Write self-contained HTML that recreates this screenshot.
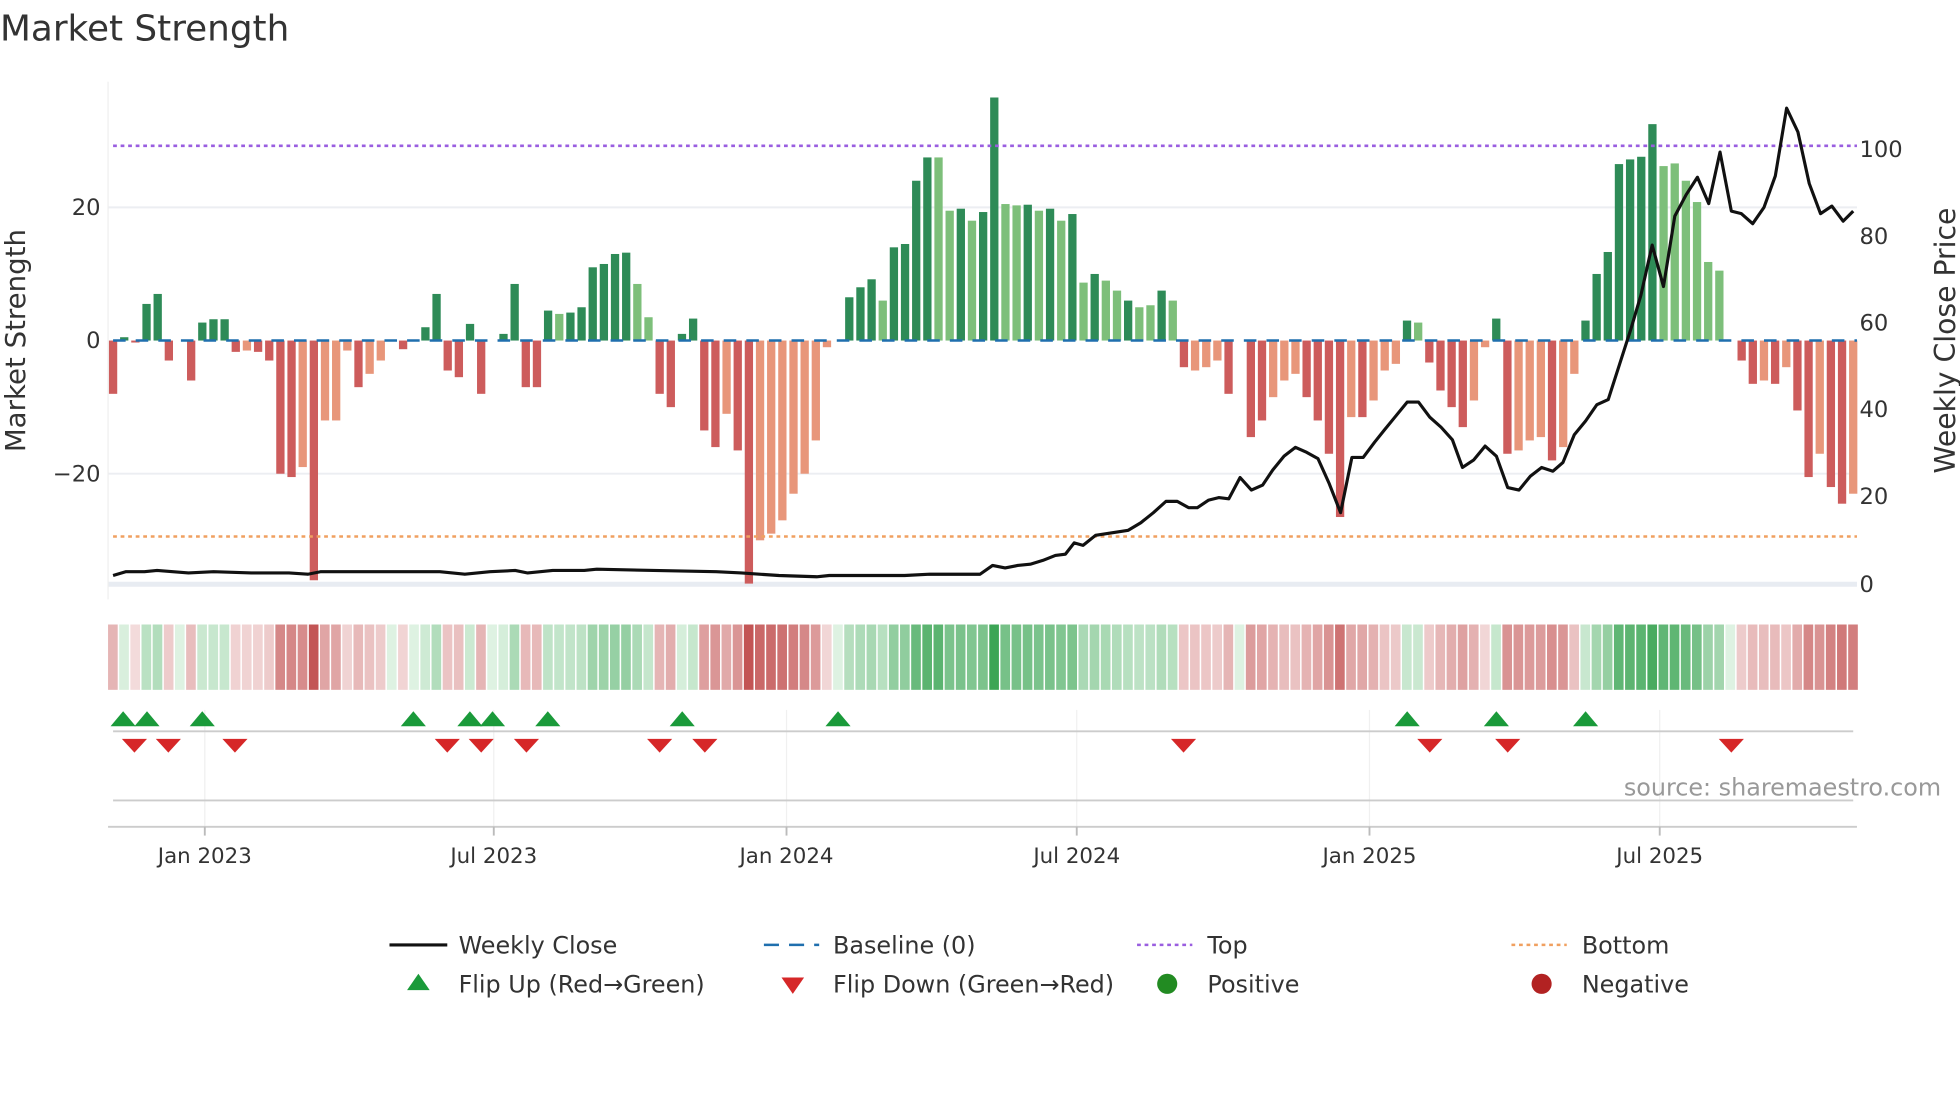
<!DOCTYPE html>
<html><head><meta charset="utf-8"><style>
html,body{margin:0;padding:0;background:#fff;width:1960px;height:1102px;overflow:hidden}
svg{display:block;font-family:"DejaVu Sans","Liberation Sans",sans-serif}
</style></head><body>
<svg id="s" width="1960" height="1102" viewBox="0 0 1560 877" xmlns="http://www.w3.org/2000/svg">
<text x="0" y="32" font-size="28.5" fill="#333">Market Strength</text>
<g stroke="#eceef2" stroke-width="1.5"><line x1="86" y1="165" x2="1478" y2="165"/><line x1="86" y1="377" x2="1478" y2="377"/></g>
<line x1="86" y1="465" x2="1478" y2="465" stroke="#e8ecf2" stroke-width="4"/>
<line x1="86" y1="65" x2="86" y2="477" stroke="#eee" stroke-width="1"/>
<g id="bars"></g>
<line x1="90" y1="271" x2="1478" y2="271" stroke="#1f6fae" stroke-width="2" stroke-dasharray="10,8"/>
<line x1="90" y1="116" x2="1478" y2="116" stroke="#9a5ee0" stroke-width="2" stroke-dasharray="3,3"/>
<line x1="90" y1="427" x2="1478" y2="427" stroke="#f0a060" stroke-width="2" stroke-dasharray="3,3"/>
<polyline id="price" fill="none" stroke="#111" stroke-width="2.5" stroke-linejoin="round"/>
<g font-size="18" fill="#333">
<text x="80" y="171" text-anchor="end">20</text><text x="80" y="277" text-anchor="end">0</text><text x="80" y="383" text-anchor="end">−20</text>
<text x="1480" y="125">100</text><text x="1480" y="194">80</text><text x="1480" y="263">60</text><text x="1480" y="332">40</text><text x="1480" y="401">20</text><text x="1480" y="471">0</text>
</g>
<text transform="translate(20,271) rotate(-90)" text-anchor="middle" font-size="22" fill="#333">Market Strength</text>
<text transform="translate(1556,271) rotate(-90)" text-anchor="middle" font-size="22.5" fill="#333">Weekly Close Price</text>
<g id="heat"></g>
<g stroke="#f0f0f0" stroke-width="1"><line x1="163" y1="565" x2="163" y2="660"/><line x1="393" y1="565" x2="393" y2="660"/><line x1="626" y1="565" x2="626" y2="660"/><line x1="857" y1="565" x2="857" y2="660"/><line x1="1090" y1="565" x2="1090" y2="660"/><line x1="1321" y1="565" x2="1321" y2="660"/></g>
<line x1="90" y1="582" x2="1475" y2="582" stroke="#ccc" stroke-width="1.5"/>
<line x1="90" y1="637" x2="1475" y2="637" stroke="#ccc" stroke-width="1.5"/>
<line x1="86" y1="658" x2="1478" y2="658" stroke="#ccc" stroke-width="1.5"/>
<g id="flips"></g>
<g stroke="#bbb" stroke-width="1.5"><line x1="163" y1="658" x2="163" y2="665"/><line x1="393" y1="658" x2="393" y2="665"/><line x1="626" y1="658" x2="626" y2="665"/><line x1="857" y1="658" x2="857" y2="665"/><line x1="1090" y1="658" x2="1090" y2="665"/><line x1="1321" y1="658" x2="1321" y2="665"/></g>
<g font-size="17" fill="#333" text-anchor="middle">
<text x="163" y="687">Jan 2023</text><text x="393" y="687">Jul 2023</text><text x="626" y="687">Jan 2024</text><text x="857" y="687">Jul 2024</text><text x="1090" y="687">Jan 2025</text><text x="1321" y="687">Jul 2025</text>
</g>
<text x="1545" y="633" text-anchor="end" font-size="19" fill="#999">source: sharemaestro.com</text>
<g font-size="19" fill="#333">
<line x1="310" y1="752" x2="356" y2="752" stroke="#111" stroke-width="2.5"/><text x="365" y="759">Weekly Close</text>
<line x1="608" y1="752" x2="652" y2="752" stroke="#1f6fae" stroke-width="2" stroke-dasharray="12,8"/><text x="663" y="759">Baseline (0)</text>
<line x1="905" y1="752" x2="949" y2="752" stroke="#9a5ee0" stroke-width="2" stroke-dasharray="3,3"/><text x="961" y="759">Top</text>
<line x1="1203" y1="752" x2="1247" y2="752" stroke="#f0a060" stroke-width="2" stroke-dasharray="3,3"/><text x="1259" y="759">Bottom</text>
<polygon points="324,788 342,788 333,775" fill="#1a9a3a"/><text x="365" y="790">Flip Up (Red→Green)</text>
<polygon points="622,778 640,778 631,791" fill="#d62728"/><text x="663" y="790">Flip Down (Green→Red)</text>
<circle cx="929" cy="783" r="8" fill="#228b22"/><text x="961" y="790">Positive</text>
<circle cx="1227" cy="783" r="8" fill="#b22222"/><text x="1259" y="790">Negative</text>
</g>
</svg>
<script>
var NS="http://www.w3.org/2000/svg";
var v=[[-8,0],[.5,0],[-.3,0],[5.5,0],[7,0],[-3,0],[0,0],[-6,0],[2.7,0],[3.2,0],[3.2,0],[-1.7,0],[-1.5,1],[-1.7,0],[-3,0],[-20,0],[-20.5,0],[-19,1],[-36,0],[-12,1],[-12,1],[-1.5,1],[-7,0],[-5,1],[-3,1],[0,0],[-1.3,0],[0,0],[2,0],[7,0],[-4.5,0],[-5.5,0],[2.5,0],[-8,0],[0,0],[1,0],[8.5,0],[-7,0],[-7,0],[4.5,0],[4,1],[4.2,0],[5,0],[11,0],[11.5,0],[13,0],[13.2,0],[8.5,1],[3.5,1],[-8,0],[-10,0],[1,0],[3.3,0],[-13.5,0],[-16,0],[-11,1],[-16.5,0],[-36.5,0],[-30,1],[-29,1],[-27,1],[-23,1],[-20,1],[-15,1],[-1,1],[0,0],[6.5,0],[8,0],[9.2,0],[6,1],[14,0],[14.5,0],[24,0],[27.5,0],[27.5,1],[19.5,1],[19.8,0],[18,1],[19.3,0],[36.5,0],[20.5,1],[20.3,1],[20.4,0],[19.5,1],[19.8,0],[18,1],[19,0],[8.7,1],[10,0],[9,1],[7.5,1],[6,0],[5,1],[5.3,1],[7.5,0],[6,1],[-4,0],[-4.5,1],[-4,1],[-3,1],[-8,0],[0,0],[-14.5,0],[-12,0],[-8.5,1],[-6,1],[-5,1],[-8.5,0],[-12,0],[-17,0],[-26.5,0],[-11.5,1],[-11.5,0],[-9,1],[-4.5,1],[-3.5,1],[3,0],[2.7,1],[-3.3,0],[-7.5,0],[-10,0],[-13,0],[-9,1],[-1,1],[3.3,0],[-17,0],[-16.5,1],[-15,1],[-14.5,1],[-18,0],[-16,1],[-5,1],[3,0],[10,0],[13.3,0],[26.5,0],[27.2,0],[27.6,0],[32.5,0],[26.2,1],[26.6,1],[24,1],[20.8,1],[11.8,1],[10.5,1],[0,0],[-3,0],[-6.5,0],[-6,1],[-6.5,0],[-4,1],[-10.5,0],[-20.5,0],[-17,1],[-22,0],[-24.5,0],[-23,1]];
var n=v.length,x0=90,dx=(1475-90)/(n-1);
var bars=document.getElementById("bars"),heat=document.getElementById("heat");
function r(g,x,y,w,h,f){var e=document.createElementNS(NS,"rect");e.setAttribute("x",x);e.setAttribute("y",y);e.setAttribute("width",w);e.setAttribute("height",h);e.setAttribute("fill",f);g.appendChild(e);}
function mix(a,b,t){return "rgb("+a.map(function(c,i){return Math.round(c+(b[i]-c)*t)}).join(",")+")";}
for(var i=0;i<n;i++){var val=v[i][0],l=v[i][1],x=x0+i*dx;
 var col=val>=0?(l?"#7dbf7a":"#2e8b57"):(l?"#e8967a":"#cd5c5c");
 if(val>0)r(bars,x-3.3,271-val*5.3,6.6,val*5.3,col);else if(val<0)r(bars,x-3.3,271,6.6,-val*5.3,col);
 var t=Math.min(1,Math.abs(val)/36);
 var hc=val>=0?mix([222,242,226],[60,165,85],Math.pow(t,0.8)):mix([244,222,222],[195,85,85],Math.pow(t,0.8));
 r(heat,x-4,497,dx-1.2,52,hc);}
var p=[[90,458],[100,455],[115,455],[125,454],[150,456],[170,455],[200,456],[230,456],[245,457],[255,455],[275,455],[300,455],[350,455],[370,457],[390,455],[410,454],[420,456],[440,454],[465,454],[475,453],[520,454],[570,455],[590,456],[620,458],[650,459],[660,458],[700,458],[720,458],[740,457],[780,457],[790,450],[800,452],[810,450],[820,449],[830,446],[840,442],[848,441],[855,432],[862,434],[872,426],[885,424],[898,422],[908,416],[918,408],[928,399],[937,399],[946,404],[953,404],[962,398],[970,396],[978,397],[987,380],[996,390],[1005,386],[1013,374],[1022,363],[1031,356],[1040,360],[1049,365],[1058,385],[1067,408],[1076,364],[1085,364],[1094,352],[1102,342],[1111,331],[1120,320],[1129,320],[1138,332],[1147,340],[1156,350],[1164,372],[1173,366],[1182,355],[1191,363],[1200,388],[1209,390],[1218,379],[1227,372],[1236,375],[1244,368],[1253,346],[1262,335],[1271,322],[1280,318],[1289,290],[1298,262],[1306,235],[1315,195],[1324,228],[1333,172],[1342,155],[1351,141],[1360,162],[1369,121],[1378,168],[1386,170],[1395,178],[1404,165],[1413,140],[1422,86],[1431,105],[1440,146],[1449,170],[1458,164],[1467,176],[1475,168]];
document.getElementById("price").setAttribute("points",p.map(function(a){return a.join(",")}).join(" "));
var fl=document.getElementById("flips");
[98,117,161,329,374,392,436,543,667,1120,1191,1262].forEach(function(x){var e=document.createElementNS(NS,"polygon");e.setAttribute("points",(x-10)+",578 "+(x+10)+",578 "+x+",566");e.setAttribute("fill","#1a9a3a");fl.appendChild(e);});
[107,134,187,356,383,419,525,561,942,1138,1200,1378].forEach(function(x){var e=document.createElementNS(NS,"polygon");e.setAttribute("points",(x-10)+",588 "+(x+10)+",588 "+x+",599");e.setAttribute("fill","#d62728");fl.appendChild(e);});
</script>
</body></html>
